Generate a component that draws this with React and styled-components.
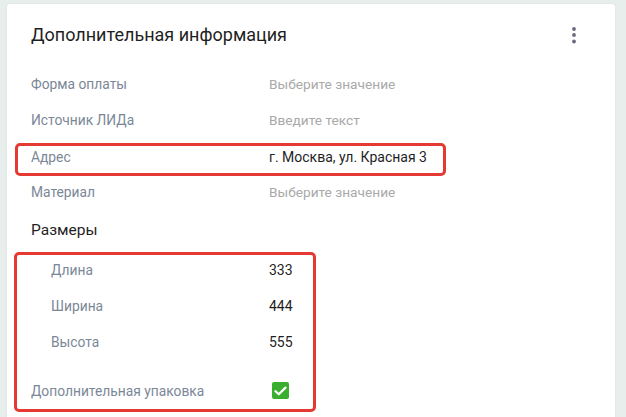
import styled, { createGlobalStyle } from "styled-components";

const GlobalStyle = createGlobalStyle`
  html, body {
    margin: 0;
    padding: 0;
    background-color: #e8eeeb;
    font-family: Roboto, "Noto Sans", Arial, sans-serif;
  }
`;

const fields = [
  { label: "Форма оплаты", placeholder: "Выберите значение" },
  { label: "Источник ЛИДа", placeholder: "Введите текст" },
];

const sizes = [
  { label: "Длина", value: "333" },
  { label: "Ширина", value: "444" },
  { label: "Высота", value: "555" },
];

export default function App() {
  return (
    <>
      <GlobalStyle />
      <Page>
        <Card>
          <Header>
            <Title>Дополнительная информация</Title>
            <MenuButton aria-label="menu">
              <svg width="6" height="18" viewBox="0 0 6 18">
                <circle cx="3" cy="3" r="1.9" fill="#676b7d" />
                <circle cx="3" cy="9" r="1.9" fill="#676b7d" />
                <circle cx="3" cy="15.5" r="1.9" fill="#676b7d" />
              </svg>
            </MenuButton>
          </Header>

          {fields.map((f) => (
            <Row key={f.label}>
              <Label>{f.label}</Label>
              <Value empty>{f.placeholder}</Value>
            </Row>
          ))}

          <Highlight $width={431} $shift={16} $top={5}>
            <Row $height={28}>
              <Label>Адрес</Label>
              <Value>г. Москва, ул. Красная 3</Value>
            </Row>
          </Highlight>

          <Row $height={32}>
            <Label>Материал</Label>
            <Value empty>Выберите значение</Value>
          </Row>

          <SectionTitle>Размеры</SectionTitle>

          <Highlight $width={302} $shift={17}>
            {sizes.map((s) => (
              <Row key={s.label} $indent>
                <Label $indent>{s.label}</Label>
                <Value>{s.value}</Value>
              </Row>
            ))}
            <CheckRow>
              <Label>Дополнительная упаковка</Label>
              <Checkbox>
                <svg width="13" height="10" viewBox="0 0 13 10">
                  <path
                    d="M1.5 5.2 L4.8 8.3 L11.5 1.6"
                    fill="none"
                    stroke="#fff"
                    strokeWidth="2.2"
                    strokeLinecap="round"
                    strokeLinejoin="round"
                  />
                </svg>
              </Checkbox>
            </CheckRow>
          </Highlight>
        </Card>
      </Page>
    </>
  );
}

const Page = styled.div`
  height: 417px;
  overflow: hidden;
  padding: 4px 11px 0 7px;
`;

const Card = styled.div`
  background-color: #ffffff;
  border-radius: 3px;
  box-shadow: 0 0 2px rgba(0, 0, 0, 0.08);
  padding: 0 24px 40px 24px;
  min-height: 460px;
`;

const Header = styled.div`
  display: flex;
  align-items: center;
  justify-content: space-between;
  height: 62px;
`;

const Title = styled.h2`
  margin: 0;
  font-size: 18px;
  font-weight: 400;
  line-height: 24px;
  color: #1f1f1f;
`;

const MenuButton = styled.button`
  display: flex;
  align-items: center;
  justify-content: center;
  width: 24px;
  height: 24px;
  padding: 0;
  margin-right: 5px;
  border: none;
  background: none;
`;

const Row = styled.div`
  display: flex;
  align-items: center;
  height: ${(p) => (p.$height ? `${p.$height}px` : "36px")};
`;

const Label = styled.span`
  flex: 0 0 ${(p) => (p.$indent ? "218px" : "238px")};
  padding-left: ${(p) => (p.$indent ? "20px" : "0")};
  font-size: 13.8px;
  color: #7b8797;
`;

const Value = styled.span`
  font-size: ${(p) => (p.empty ? "13.7px" : "14px")};
  color: ${(p) => (p.empty ? "#a9a9a9" : "#1f1f1f")};
`;

const Highlight = styled.div`
  width: ${(p) => p.$width}px;
  margin: ${(p) => p.$top || 0}px 0 0 -${(p) => p.$shift}px;
  padding: 0 0 ${(p) => (p.$top ? 5 : 0)}px ${(p) => p.$shift}px;
  box-sizing: border-box;
  outline: 3px solid #e53a33;
  outline-offset: -3px;
  border-radius: 5px;
`;

const SectionTitle = styled.div`
  display: flex;
  align-items: center;
  height: 44px;
  font-size: 15.5px;
  color: #1f1f1f;
`;

const CheckRow = styled(Row)`
  height: 42px;
  margin-top: 10px;
  align-items: flex-start;
  padding-top: 12px;
  box-sizing: border-box;
  ${Label} {
    line-height: 18px;
  }
`;

const Checkbox = styled.span`
  display: flex;
  align-items: center;
  justify-content: center;
  width: 17px;
  height: 17px;
  margin-left: 3px;
  border-radius: 2px;
  background-color: #3aae2e;
`;
